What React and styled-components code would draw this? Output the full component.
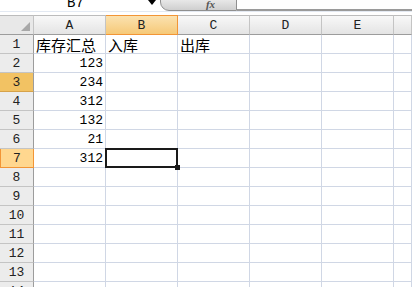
import React from 'react';
import styled, { createGlobalStyle, css } from 'styled-components';

const GlobalStyle = createGlobalStyle`
    html, body {
        margin: 0;
        padding: 0;
        background: #ffffff;
        overflow: hidden;
    }
`;

const COLS = ['A', 'B', 'C', 'D', 'E', ''];
const ROWS = 14;
const data = {
    1: { A: { text: '库存汇总', cjk: true }, B: { text: '入库', cjk: true }, C: { text: '出库', cjk: true } },
    2: { A: { text: '123' } },
    3: { A: { text: '234' } },
    4: { A: { text: '312' } },
    5: { A: { text: '132' } },
    6: { A: { text: '21' } },
    7: { A: { text: '312' } },
};
const activeCol = 'B';
const activeRow = 7;
const hoverRow = 3;

const App = () => {
    return (
        <Page>
            <GlobalStyle />
            <FormulaBar>
                <NameBox><span>B7</span></NameBox>
                <DropArrow />
                <FxButton><em>fx</em></FxButton>
                <FormulaInput />
            </FormulaBar>
            <Gap />
            <Sheet>
                <Corner />
                {COLS.map((c, i) => (
                    <ColHead key={i} $active={c === activeCol}>{c}</ColHead>
                ))}
                {Array.from({ length: ROWS }, (_, r) => {
                    const row = r + 1;
                    return (
                        <React.Fragment key={row}>
                            <RowHead $state={row === activeRow ? 'active' : row === hoverRow ? 'hover' : ''}>
                                {row}
                            </RowHead>
                            {COLS.map((c, i) => {
                                const cell = data[row] && data[row][c];
                                return (
                                    <Cell
                                        key={i}
                                        $cjk={cell && cell.cjk}
                                        $selected={c === activeCol && row === activeRow}
                                    >
                                        {cell ? cell.text : ''}
                                    </Cell>
                                );
                            })}
                        </React.Fragment>
                    );
                })}
            </Sheet>
        </Page>
    );
};

const mono = `"Liberation Mono", "DejaVu Sans Mono", monospace`;
const cjk = `"SimSun", "Noto Sans CJK SC", sans-serif`;

const Page = styled.div`
    width: 412px;
    height: 287px;
    overflow: hidden;
    background: #fff;
    display: flex;
    flex-direction: column;
`;

const FormulaBar = styled.div`
    height: 11px;
    display: flex;
    align-items: stretch;
    flex-shrink: 0;
    overflow: hidden;
`;

const NameBox = styled.div`
    width: 145px;
    display: flex;
    justify-content: center;
    align-items: flex-end;
    overflow: hidden;
    span {
        font-family: ${mono};
        font-size: 14px;
        line-height: 14px;
        color: #000;
        padding-bottom: 1px;
        padding-left: 6px;
    }
`;

const DropArrow = styled.div`
    width: 14px;
    position: relative;
    &::after {
        content: '';
        position: absolute;
        left: 3px;
        top: 0;
        border-left: 4px solid transparent;
        border-right: 4px solid transparent;
        border-top: 5px solid #000;
    }
`;

const FxButton = styled.div`
    width: 77px;
    margin-left: 1px;
    margin-top: -6px;
    border: 1px solid #8f8f8f;
    border-radius: 0 0 0 9px;
    background: linear-gradient(#f4f4f4, #cfcfcf);
    display: flex;
    justify-content: center;
    align-items: flex-end;
    box-sizing: border-box;
    em {
        font-family: "Liberation Serif", serif;
        font-size: 11px;
        line-height: 11px;
        color: #555;
        margin-left: 24px;
        font-weight: bold;
    }
`;

const FormulaInput = styled.div`
    flex: 1;
    border-bottom: 2px solid #9a9a9a;
    box-sizing: border-box;
`;

const Gap = styled.div`
    height: 3px;
    flex-shrink: 0;
    border-top: 1px solid #e3e9f2;
`;

const Sheet = styled.div`
    display: grid;
    grid-template-columns: 34px repeat(5, 72px) 1fr;
    grid-template-rows: 20px;
    grid-auto-rows: 19px;
    flex: 1;
    overflow: hidden;
`;

const Corner = styled.div`
    background: #e8e8e8;
    border-top: 1px solid #bcbcbc;
    border-right: 1px solid #c4c4c4;
    border-bottom: 1px solid #9c9c9c;
    box-sizing: border-box;
    position: relative;
    &::after {
        content: '';
        position: absolute;
        right: 3px;
        bottom: 3px;
        border-left: 9px solid transparent;
        border-bottom: 9px solid #a8a8a8;
    }
`;

const ColHead = styled.div`
    box-sizing: border-box;
    border-top: 1px solid #bcbcbc;
    border-right: 1px solid #c4c4c4;
    border-bottom: 1px solid #9c9c9c;
    background: linear-gradient(#f8f8f8, #e4e4e4);
    font-family: ${mono};
    font-size: 13px;
    color: #222;
    display: flex;
    justify-content: center;
    align-items: center;
    ${(p) => p.$active && css`
        background: linear-gradient(#fbe2b0, #f6c978);
        border: 1px solid #f29536;
        border-left: none;
    `}
`;

const RowHead = styled.div`
    box-sizing: border-box;
    background: #ececec;
    border-right: 1px solid #9c9c9c;
    border-bottom: 1px solid #c4c4c4;
    font-family: ${mono};
    font-size: 13px;
    color: #222;
    display: flex;
    justify-content: center;
    align-items: center;
    ${(p) => p.$state === 'hover' && css`
        background: #f2c263;
        border-bottom-color: #d6a24a;
    `}
    ${(p) => p.$state === 'active' && css`
        background: #ffd78f;
        border: 1px solid #f29536;
        border-top: none;
    `}
`;

const Cell = styled.div`
    box-sizing: border-box;
    border-right: 1px solid #d0d7e5;
    border-bottom: 1px solid #d0d7e5;
    display: flex;
    align-items: center;
    justify-content: ${(p) => (p.$cjk ? 'flex-start' : 'flex-end')};
    padding: 0 2px;
    font-family: ${(p) => (p.$cjk ? cjk : mono)};
    font-size: ${(p) => (p.$cjk ? '15px' : '13px')};
    color: #000;
    white-space: nowrap;
    position: relative;
    ${(p) => p.$selected && css`
        z-index: 1;
        &::before {
            content: '';
            position: absolute;
            top: -1px;
            left: -1px;
            right: -1px;
            bottom: -1px;
            border: 2px solid #1a1a1a;
        }
        &::after {
            content: '';
            position: absolute;
            right: -3px;
            bottom: -3px;
            width: 5px;
            height: 5px;
            background: #1a1a1a;
        }
    `}
`;

export default App;
